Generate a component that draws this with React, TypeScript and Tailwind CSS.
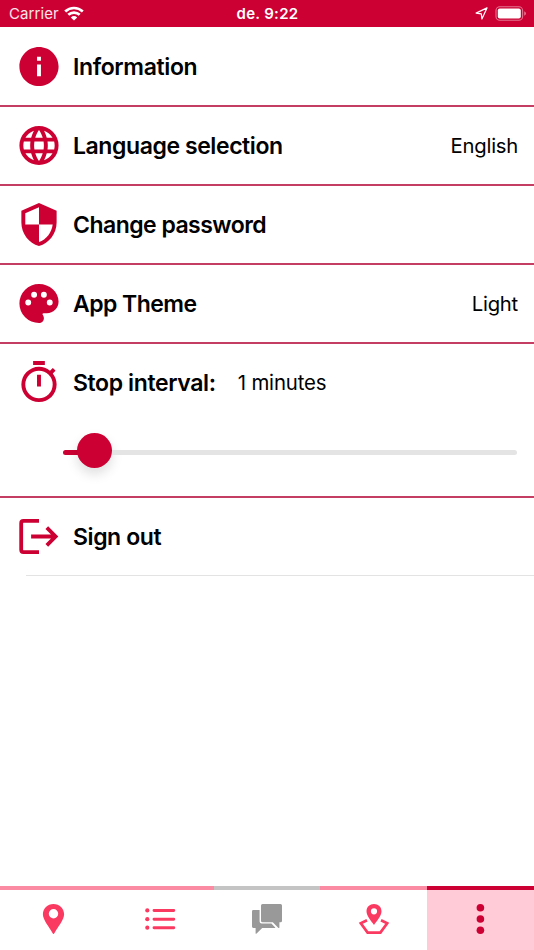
import { useState, type ReactNode } from 'react';
import clsx from 'clsx';

const ICON_PATHS = {
  info: 'M12 2C6.48 2 2 6.48 2 12s4.48 10 10 10 10-4.48 10-10S17.52 2 12 2zm1 15h-2v-6h2v6zm0-8h-2V7h2v2z',
  web: 'M16.36 14C16.44 13.34 16.5 12.68 16.5 12C16.5 11.32 16.44 10.66 16.36 10H19.74C19.9 10.64 20 11.31 20 12C20 12.69 19.9 13.36 19.74 14M14.59 19.56C15.19 18.45 15.65 17.25 15.97 16H18.92C17.96 17.65 16.43 18.93 14.59 19.56M14.34 14H9.66C9.56 13.34 9.5 12.68 9.5 12C9.5 11.32 9.56 10.65 9.66 10H14.34C14.43 10.65 14.5 11.32 14.5 12C14.5 12.68 14.43 13.34 14.34 14M12 19.96C11.17 18.76 10.5 17.43 10.09 16H13.91C13.5 17.43 12.83 18.76 12 19.96M8 8H5.08C6.03 6.34 7.57 5.06 9.4 4.44C8.8 5.55 8.35 6.75 8 8M5.08 16H8C8.35 17.25 8.8 18.45 9.4 19.56C7.57 18.93 6.03 17.65 5.08 16M4.26 14C4.1 13.36 4 12.69 4 12C4 11.31 4.1 10.64 4.26 10H7.64C7.56 10.66 7.5 11.32 7.5 12C7.5 12.68 7.56 13.34 7.64 14M12 4.03C12.83 5.23 13.5 6.57 13.91 8H10.09C10.5 6.57 11.17 5.23 12 4.03M18.92 8H15.97C15.65 6.75 15.19 5.55 14.59 4.44C16.43 5.07 17.96 6.34 18.92 8M12 2A10 10 0 0 0 2 12A10 10 0 0 0 12 22A10 10 0 0 0 22 12A10 10 0 0 0 12 2Z',
  shield: 'M12 1L3 5v6c0 5.55 3.84 10.74 9 12 5.16-1.26 9-6.45 9-12V5l-9-4zm0 11h7c-.53 4.12-3.28 7.79-7 8.94V12H5V6.3l7-3.11V12z',
  palette: 'M12 2A10 10 0 0 0 2 12A10 10 0 0 0 12 22C13.4 22 14.5 20.9 14.5 19.5C14.5 18.9 14.2 18.3 13.9 17.8C13.8 17.7 13.8 17.6 13.8 17.5C13.8 17.2 14 17 14.3 17H16A6 6 0 0 0 22 11C22 6 17.5 2 12 2M17.5 13a1.5 1.5 0 1 1 0-3a1.5 1.5 0 0 1 0 3M14.5 9a1.5 1.5 0 1 1 0-3a1.5 1.5 0 0 1 0 3M9.5 9a1.5 1.5 0 1 1 0-3a1.5 1.5 0 0 1 0 3M6.5 13a1.5 1.5 0 1 1 0-3a1.5 1.5 0 0 1 0 3Z',
  timer: 'M12 20A7 7 0 0 1 5 13A7 7 0 0 1 12 6A7 7 0 0 1 19 13A7 7 0 0 1 12 20M19.03 7.39L20.45 5.97C20 5.46 19.55 5 19.04 4.56L17.62 6C16.07 4.74 14.12 4 12 4A9 9 0 0 0 3 13A9 9 0 0 0 12 22C17 22 21 17.97 21 13C21 10.88 20.26 8.93 19.03 7.39M11 14H13V8H11M15 1H9V3H15V1Z',
};

function Icon({ name }: { name: keyof typeof ICON_PATHS }) {
  return (
    <svg viewBox="-0.25 0 24 24" className="size-[47px] shrink-0" fill="currentColor" fillRule="evenodd">
      <path d={ICON_PATHS[name]} />
    </svg>
  );
}

function SignOutIcon() {
  return (
    <svg viewBox="-0.5 0 47 47" className="size-[47px] shrink-0" fill="none" stroke="currentColor" strokeWidth="3.8">
      <path d="M23.5 7.9H8Q5.7 7.9 5.7 10.2V36.8Q5.7 39.1 8 39.1H23.5" />
      <path d="M15.6 23.5H40M31.3 14.7L40.1 23.5L31.3 32.3" />
    </svg>
  );
}

interface RowProps {
  icon: ReactNode;
  label: string;
  labelClass: string;
  value?: string;
  className?: string;
}

function Row({ icon, label, labelClass, value, className }: RowProps) {
  return (
    <div className={clsx('flex items-center pl-[15px] pr-4', className)}>
      <span className="flex text-[#cc0033]">{icon}</span>
      <span className={clsx('ml-[11px] text-[23px] font-semibold whitespace-nowrap', labelClass)}>{label}</span>
      {value && <span className="ml-auto pt-px text-[20.3px] tracking-[-0.25px]">{value}</span>}
    </div>
  );
}

function StatusBar() {
  return (
    <header className="grid h-[27px] grid-cols-3 items-center bg-[#cc0033] pl-[9px] pr-[7px] text-[15px] text-white">
      <div className="flex items-center gap-[5px]">
        <span className="pt-[2px] tracking-[0.1px] text-white/90">Carrier</span>
        <svg viewBox="0 0 20 15" className="-mt-px h-[15px] w-5" fill="none" stroke="currentColor" strokeWidth="2.7">
          <path d="M1.2 5.5C6.2.8 13.8.8 18.8 5.5" />
          <path d="M4.3 8.8C7.5 5.8 12.5 5.8 15.7 8.8" />
          <path d="M10 14.6L6.8 11.4Q10 8.8 13.2 11.4Z" fill="currentColor" stroke="none" />
        </svg>
      </div>
      <span className="pt-[2px] pr-px text-center font-semibold tracking-[0.3px]">de. 9:22</span>
      <div className="flex items-center justify-end gap-[7px]">
        <svg viewBox="0 0 13 13" className="size-[13px]" fill="none" stroke="currentColor" strokeWidth="1.2" strokeLinejoin="round">
          <path d="M12 .9L1.1 6.1L6.3 6.8L6.9 12Z" />
        </svg>
        <svg viewBox="0 0 32 15" className="h-[15px] w-8">
          <rect x="1" y=".8" width="26.6" height="13.4" rx="3.8" fill="none" stroke="#fff" strokeOpacity=".45" strokeWidth="1.1" />
          <rect x="2.8" y="2.6" width="23" height="9.8" rx="2" fill="#fff" />
          <path d="M29.2 5.3Q31 6 31 7.5T29.2 9.7Z" fill="#fff" fillOpacity=".45" />
        </svg>
      </div>
    </header>
  );
}

const TABS = [
  {
    id: 'location',
    color: 'border-[#fb8ba2] text-[#fb3a62]',
    icon: (
      <svg viewBox="-0.5 0 32 32" className="size-8" fill="currentColor" fillRule="evenodd">
        <path d="M16 1C10 1 5.4 5.5 5.4 11.3C5.4 17 12 24.5 15 30Q16 31.8 17 30C20 24.5 26.6 17 26.6 11.3C26.6 5.5 22 1 16 1ZM16 6.1a4.7 4.7 0 1 1 0 9.4a4.7 4.7 0 0 1 0-9.4Z" />
      </svg>
    ),
  },
  {
    id: 'list',
    color: 'border-[#fb8ba2] text-[#fb3a62]',
    icon: (
      <svg viewBox="0 0 32 32" className="size-8" fill="currentColor">
        <circle cx="3.3" cy="7.4" r="2.1" />
        <circle cx="3.3" cy="16.2" r="2.1" />
        <circle cx="3.3" cy="24.7" r="2.1" />
        <path d="M10 7.5H29.8M10 16.2H29.8M10 24.8H29.8" stroke="currentColor" strokeWidth="2.9" strokeLinecap="round" />
      </svg>
    ),
  },
  {
    id: 'chat',
    color: 'border-[#c4c4c4] text-[#999999]',
    icon: (
      <svg viewBox="0 0 32 32" className="size-8" fill="currentColor">
        <path d="M2.2 7H8.6V18.6Q8.6 20.6 10.6 20.6H20.4L24.2 24.4V25H11.2L5.6 30.6Q4.6 31.3 4.6 30V25H2.2Q1 25 1 23.6V8.4Q1 7 2.2 7Z" />
        <path d="M11.5 1H29.5Q31 1 31 2.5V17.8Q31 19.3 29.5 19.3H28.4V24.4Q28.2 25.6 27.2 24.8L21.8 19.3H11.5Q10 19.3 10 17.8V2.5Q10 1 11.5 1Z" />
      </svg>
    ),
  },
  {
    id: 'area',
    color: 'border-[#fb8ba2] text-[#fb3a62]',
    icon: (
      <svg viewBox="0 0 32 32" className="size-8" fill="currentColor" fillRule="evenodd">
        <path d="M16 1C11.8 1 8.5 4.1 8.5 8.2C8.5 12.8 13 17.5 16 22C19 17.5 23.5 12.8 23.5 8.2C23.5 4.1 20.2 1 16 1ZM16 5.2a3.1 3.1 0 1 1 0 6.2a3.1 3.1 0 0 1 0-6.2Z" />
        <path d="M9 17.2L2.8 20.3L9.6 29.6H22.4L29.2 20.3L23 17.2" fill="none" stroke="currentColor" strokeWidth="2.7" />
      </svg>
    ),
  },
  {
    id: 'more',
    color: 'border-[#cc0033] bg-[#fecbd7] text-[#cc0033]',
    icon: (
      <svg viewBox="0.6 0 32 32" className="size-8" fill="currentColor">
        <circle cx="16" cy="4.8" r="3.8" />
        <circle cx="16" cy="16" r="3.8" />
        <circle cx="16" cy="27.2" r="3.8" />
      </svg>
    ),
  },
];

export default function App() {
  const [minutes] = useState(1);

  return (
    <div className="flex h-[950px] w-[534px] flex-col overflow-hidden bg-white font-['Inter',sans-serif] text-black">
      <StatusBar />

      {/* Settings list */}
      <main className="flex-1">
        <Row className="h-[80px] border-b-2 border-[#c43d62]" icon={<Icon name="info" />} label="Information" labelClass="pt-[2px] tracking-[-0.37px]" />
        <Row className="h-[79px] border-b-2 border-[#c43d62]" icon={<Icon name="web" />} label="Language selection" labelClass="pt-px tracking-[-0.42px]" value="English" />
        <Row className="h-[79px] border-b-2 border-[#c43d62]" icon={<Icon name="shield" />} label="Change password" labelClass="pt-px tracking-[-0.53px]" />
        <Row className="h-[79px] border-b-2 border-[#c43d62]" icon={<Icon name="palette" />} label="App Theme" labelClass="pt-px tracking-[-0.55px]" value="Light" />

        {/* Stop interval with slider */}
        <div className="h-[154px] border-b-2 border-[#c43d62]">
          <div className="flex h-[77px] items-center pl-[15px]">
            <span className="flex text-[#cc0033]"><Icon name="timer" /></span>
            <span className="ml-[11px] pt-px text-[23px] font-semibold tracking-[-0.38px]">Stop interval:</span>
            <span className="ml-[22px] pt-px text-[20.4px] tracking-[-0.15px]">{minutes} minutes</span>
          </div>
          <div className="mt-[11px] ml-[63px] mr-[17px] flex h-9 items-center">
            <div className="-mr-1 mt-[4px] h-[5px] w-[18px] rounded-l-full bg-[#cc0033]" />
            <div className="size-[35px] shrink-0 rounded-full bg-[#cc0033] shadow-[0_6px_12px_rgba(0,0,0,0.13)]" />
            <div className="mt-[4px] h-[5px] flex-1 rounded-r-full bg-[#e4e4e4]" />
          </div>
        </div>

        <Row className="h-[77px]" icon={<SignOutIcon />} label="Sign out" labelClass="pt-px tracking-[-0.42px]" />
        <div className="ml-[26px] h-px bg-[#e3e3e3]" />
      </main>

      {/* Bottom tabs */}
      <nav className="grid h-16 grid-cols-5">
        {TABS.map(tab => (
          <button key={tab.id} aria-label={tab.id} className={clsx('flex justify-center border-t-4 pt-[12.6px]', tab.color)}>
            {tab.icon}
          </button>
        ))}
      </nav>
    </div>
  );
}
